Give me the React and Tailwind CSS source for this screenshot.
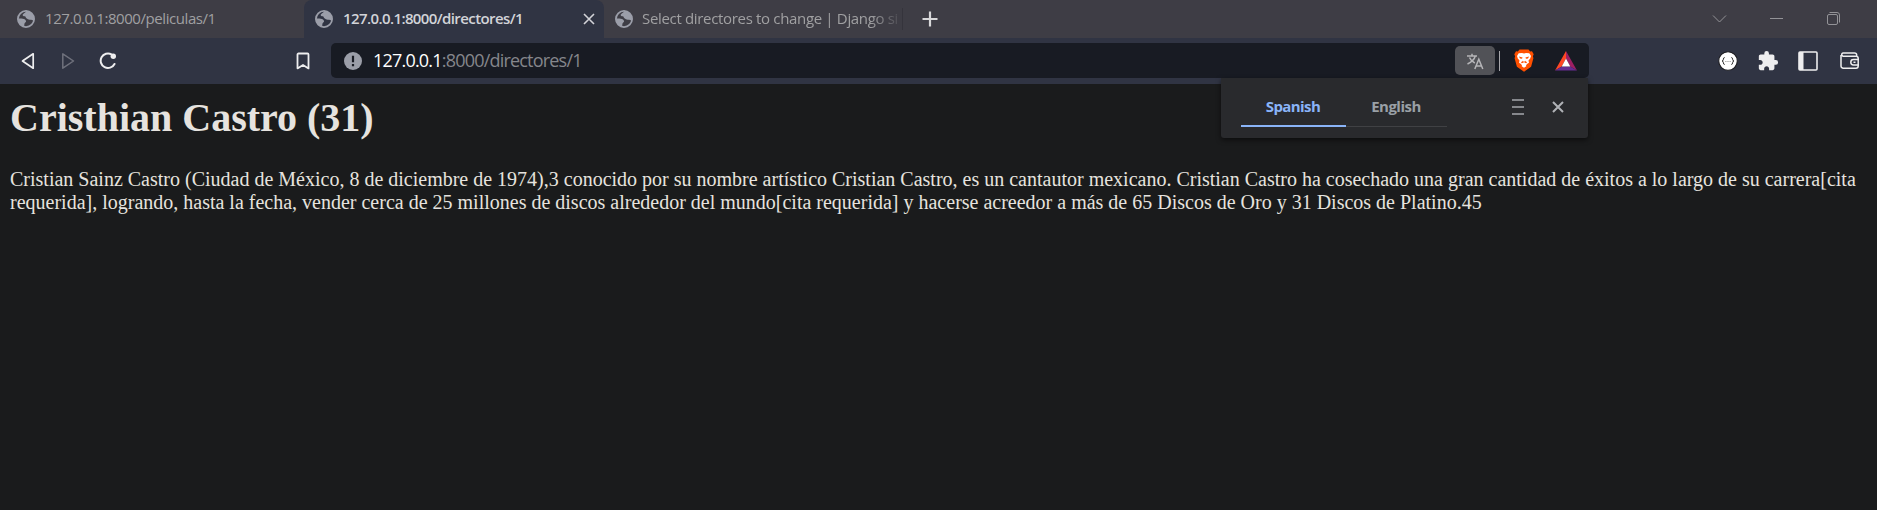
import React from "react";
import { MdExtension } from "react-icons/md";

const UI = "font-['Open_Sans','Noto_Sans',sans-serif]";

function Cross({ className, w }) {
  return (
    <svg viewBox="0 0 12 12" className={className} fill="none" stroke="currentColor" strokeWidth={w}>
      <path d="M1 1 11 11M11 1 1 11" />
    </svg>
  );
}

function Globe() {
  return (
    <svg viewBox="0 0 18 18" className="mx-[1.5px] size-[18px] shrink-0" fill="none">
      <circle cx="9" cy="9" r="8.100" stroke="#9b9ea9" strokeWidth="1.800" />
      <path
        d="M9.300 1C8.800 2.500 7 3 5.800 4.400 5.200 5.400 6.300 6.200 7.800 6.300 8.800 6.400 8.600 7.600 9.400 8.300 10.500 9.200 11.500 9.800 13 9.700 14.500 9.500 15.500 10.500 17 10.300A8.200 8.200 0 0 0 9.300 1Z"
        fill="#9b9ea9"
      />
      <path
        d="M1 8.500C3.500 8.500 6.500 8.300 8 9.500 9.500 10.700 9.300 11.800 8.200 12.500 7 13.200 7.800 14.500 6.800 16.800A8.200 8.200 0 0 1 1 8.500Z"
        fill="#9b9ea9"
      />
    </svg>
  );
}

function TabStrip() {
  return (
    <div className="flex h-[38px] items-stretch bg-[#3e3d45]">
      <div className="flex w-[304px] items-center pl-[15px]">
        <Globe />
        <span className="-mt-[2px] ml-[9px] whitespace-nowrap text-[15px] tracking-[-0.43px] text-[#a0a0a2]">
          127.0.0.1:8000/peliculas/1
        </span>
      </div>
      <div className="flex w-[300px] items-center rounded-t-lg bg-[#303443] pl-[9px] text-[#d2d3d8]">
        <Globe />
        <span className="-mt-[2px] ml-[9px] w-[237px] whitespace-nowrap text-[15px] font-semibold tracking-[-0.6px]">
          127.0.0.1:8000/directores/1
        </span>
        <Cross className="ml-[3px] size-[12px]" w={1.6} />
      </div>
      <div className="flex w-[298px] items-center pl-[9px]">
        <Globe />
        <span className="-mt-[2px] ml-[8px] whitespace-nowrap text-[15px] tracking-[-0.33px] text-[#a0a0a2] [mask-image:linear-gradient(to_right,black_228px,transparent_262px)]">
          Select directores to change | Django si
        </span>
      </div>
      <div className="my-[8px] w-px bg-[#35343c]" />
      <svg viewBox="0 0 16 16" className="ml-[19px] size-[16px] self-center text-[#d8d8da]" fill="none" stroke="currentColor" strokeWidth="2.2">
        <path d="M8 .5v15M.5 8h15" />
      </svg>
      <svg viewBox="0 0 130 38" className="ml-auto mr-[36px] h-[38px] w-[130px] text-[#939397]" fill="none" stroke="currentColor" strokeWidth="1">
        <path d="M2 15.5 8.5 22 15 15.5M59 18.5h13" />
        <rect x="116.500" y="14.500" width="10" height="10" rx="1.500" />
        <path d="M118.500 12.500h7.500a2.500 2.500 0 0 1 2.500 2.500v7.500" />
      </svg>
    </div>
  );
}

function Bat() {
  return (
    <svg viewBox="0 0 22 20" className="ml-[21px] h-[20px] w-[22px]">
      <path d="M11 0 0 19.500 6.700 15.500 11 7.500Z" fill="#ff4724" />
      <path d="M11 0 22 19.500 15.300 15.500 11 7.500Z" fill="#9e1f63" />
      <path d="M0 19.500H22L15.300 15.500H6.700Z" fill="#662d91" />
      <path d="M11 7.500 15.300 15.500H6.700Z" fill="#fff" />
    </svg>
  );
}

function Omnibox() {
  return (
    <div className="flex h-[35px] w-[1258px] items-center rounded-[5px] bg-[#181b23] pl-[13px]">
      <svg viewBox="0 0 18 18" className="size-[18px]">
        <circle cx="9" cy="9" r="9" fill="#9b9ea8" />
        <path d="M7.900 3.700h2.200v6.600H7.900zM7.900 12.100h2.200v2.200H7.900z" fill="#181b23" />
      </svg>
      <span className="ml-[11px] w-[1082px] whitespace-nowrap text-[18px] tracking-[-0.8px] text-[#85868b]">
        <span className="text-white">127.0.0.1</span>:8000/directores/1
      </span>
      <div className="flex h-[29px] w-[40px] items-center justify-center rounded-[5px] bg-[#515257]">
        <svg viewBox="0 0 18 17" className="mt-[2px] h-[17px] w-[18px]" fill="none" stroke="#b5b5b8" strokeWidth="1.500">
          <path d="M1 3h10M6 .7V3M9.300 3C8.500 6 5.500 9 1.500 11M3.500 4.500C4.500 7 6.500 8.800 8.800 10" />
          <path d="M8.800 16 12.800 6.200 16.800 16M10.200 12.900h5.200" />
        </svg>
      </div>
      <div className="ml-[4px] h-[20px] w-px bg-[#a6a6aa]" />
      <svg viewBox="0 0 20 23" className="ml-[14px] h-[23px] w-[20px]">
        <path d="M5.500.5h9l1.700 2 1.800-.2 1.700 3-.8 2 .5 2-2.300 8.500L10 22.800 2.900 17.800.6 9.300l.5-2-.8-2 1.700-3 1.800.2Z" fill="#ff5000" />
        <path d="M10 4.500 12 4l3.300.2L17 7l-.8 2.500-1.700 2 .5 2.300-2 1.200-1 1.500.3.700L10 18.800l-2.300-1.600.3-.7L7 15l-2-1.200.5-2.300-1.700-2L3 7l1.700-2.800L8 4Z" fill="#fff" />
        <path d="m5 7.600 3.600.9-.6 1.200-2-.3ZM15 7.600l-3.600.9.6 1.200 2-.3ZM8.200 10.500 8.800 12 7 13.200 7.800 14.200 10 13.200l2.200 1 .8-1L11.200 12l.6-1.500-.8 1.700-1 .6-1-.6Z" fill="#ff5000" />
      </svg>
      <Bat />
    </div>
  );
}

function Toolbar() {
  return (
    <div className="flex h-[46px] items-center bg-[#303443] pb-px text-[#eeeeef]">
      <svg viewBox="0 0 14 18" className="ml-[21px] h-[18px] w-[14px]" fill="none" stroke="currentColor" strokeWidth="1.700" strokeLinejoin="round">
        <path d="M12.200 1.800v14.400L1.500 9Z" />
      </svg>
      <svg viewBox="0 0 14 18" className="ml-[26px] h-[18px] w-[14px] text-[#6f717c]" fill="none" stroke="currentColor" strokeWidth="1.500" strokeLinejoin="round">
        <path d="M1.800 1.800v14.400L12.500 9Z" />
      </svg>
      <svg viewBox="0 0 18 18" className="ml-[24px] size-[18px]" fill="none" stroke="currentColor" strokeWidth="2" strokeLinecap="round">
        <path d="M12.500 2.300A7.300 7.300 0 1 0 15.500 12" />
        <circle cx="14.300" cy="4.200" r="2.700" fill="currentColor" stroke="none" />
      </svg>
      <svg viewBox="0 0 14 18" className="ml-[179px] mr-[21px] h-[18px] w-[14px]" fill="none" stroke="currentColor" strokeWidth="1.800" strokeLinejoin="round">
        <path d="M1.500 2.500a1 1 0 0 1 1-1h9a1 1 0 0 1 1 1v13.900L7 13 1.500 16.400Z" />
      </svg>
      <Omnibox />
      <svg viewBox="0 0 20 20" className="ml-[128.500px] size-[20px]">
        <circle cx="10" cy="10" r="9.300" fill="#fff" stroke="#1c1c20" strokeWidth="1.100" />
        <path d="M6.700 6.500Q5.400 6.500 5.400 8.200T4 10Q5.400 10.100 5.400 11.800T6.700 13.500M13.300 6.500Q14.600 6.500 14.600 8.200T16 10Q14.600 10.100 14.600 11.800T13.300 13.500" fill="none" stroke="#333" strokeWidth="1" />
        <path d="M7.400 10.500h1M9.500 10.500h1M11.600 10.500h1" stroke="#888" strokeWidth="1" />
      </svg>
      <MdExtension className="ml-[19.500px] size-[22px]" />
      <svg viewBox="0 0 20 20" className="ml-[19px] size-[20px]" fill="none" stroke="currentColor" strokeWidth="1.600">
        <rect x="1" y="1" width="18" height="18" rx="1" />
        <path d="M1 1h4.500v18H1Z" fill="currentColor" stroke="none" />
      </svg>
      <svg viewBox="0 0 20 17" className="ml-[22px] h-[17px] w-[20px]" fill="none" stroke="currentColor" strokeWidth="1.500">
        <path d="M1 3v11a2.200 2.200 0 0 0 2.200 2.200H16A2.200 2.200 0 0 0 18.200 14V6.400A2.200 2.200 0 0 0 16 4.200H3A1.700 1.700 0 0 1 3 .9h11.500A2.200 2.200 0 0 1 16.700 3v1.200" />
        <path d="M19 7.500h-5.500a2.700 2.700 0 0 0 0 5.400H19M13.500 10.200h2" />
      </svg>
    </div>
  );
}

function TranslatePopup() {
  return (
    <div className="absolute left-[1221px] top-[78px] flex h-[60px] w-[367px] rounded-b-[3px] bg-[#292a2d] pl-[20px] text-[15px] font-bold shadow-[0_2px_5px_rgba(0,0,0,0.55)]">
      <div className="flex h-[49px] w-[105px] items-center justify-center border-b-2 border-[#8ab4f8] pt-[9px] tracking-[-0.6px] text-[#8ab4f8]">
        <span className="-ml-px">Spanish</span>
      </div>
      <div className="flex h-[49px] w-[101px] items-center justify-center border-b border-[#404144] pt-[8px] tracking-[-0.5px] text-[#9aa0a6]">
        <span className="-ml-px">English</span>
      </div>
      <svg viewBox="0 0 12 16" className="ml-[65px] mt-[21px] h-[16px] w-[12px]" stroke="#a5a8ac" strokeWidth="1.500">
        <path d="M0 1h12M0 8h12M0 15h12" />
      </svg>
      <Cross className="ml-[28px] mt-[23px] size-[12px] text-[#b0b2b6]" w={2} />
    </div>
  );
}

export default function App() {
  return (
    <div className="relative h-[510px] overflow-hidden bg-[#1a1b1c]">
      <div className={UI}>
        <TabStrip />
        <Toolbar />
      </div>
      <main className="px-[10px] pt-[11px] font-['Liberation_Serif',serif] text-[#e6e3df]">
        <h1 className="text-[40px] font-bold leading-[46px]">Cristhian Castro (31)</h1>
        <p className="mt-[27px] text-[20px] leading-[23px]">
          Cristian Sainz Castro (Ciudad de México, 8 de diciembre de 1974),3 conocido por su nombre artístico Cristian
          Castro, es un cantautor mexicano. Cristian Castro ha cosechado una gran cantidad de éxitos a lo largo de su
          carrera[cita requerida], logrando, hasta la fecha, vender cerca de 25 millones de discos alrededor del
          mundo[cita requerida] y hacerse acreedor a más de 65 Discos de Oro y 31 Discos de Platino.45
        </p>
      </main>
      <div className={UI}>
        <TranslatePopup />
      </div>
    </div>
  );
}
